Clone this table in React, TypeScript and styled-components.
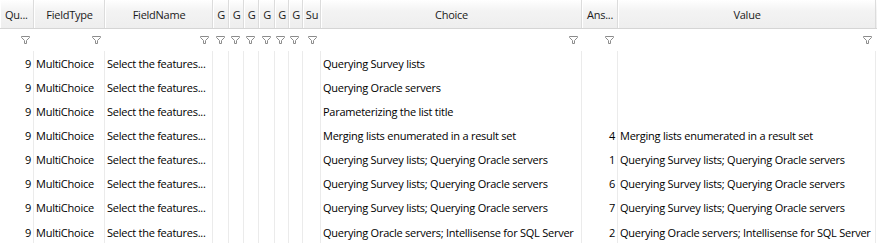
import React from 'react';
import styled, { createGlobalStyle } from 'styled-components';

const GlobalStyle = createGlobalStyle`
  html, body {
    margin: 0;
    padding: 0;
    background: #ffffff;
  }
  body {
    font-family: 'Open Sans', 'Noto Sans', Arial, sans-serif;
    font-size: 11px;
    letter-spacing: -0.25px;
    color: #000;
  }
`;

type Col = { key: string; title: string; width: number; align: 'left' | 'right' };

const columns: Col[] = [
  { key: 'qu', title: 'Qu...', width: 34, align: 'right' },
  { key: 'type', title: 'FieldType', width: 71, align: 'left' },
  { key: 'name', title: 'FieldName', width: 108, align: 'left' },
  { key: 'g1', title: 'G', width: 16, align: 'left' },
  { key: 'g2', title: 'G', width: 15, align: 'left' },
  { key: 'g3', title: 'G', width: 15, align: 'left' },
  { key: 'g4', title: 'G', width: 16, align: 'left' },
  { key: 'g5', title: 'G', width: 14, align: 'left' },
  { key: 'g6', title: 'G', width: 14, align: 'left' },
  { key: 'su', title: 'Su', width: 18, align: 'left' },
  { key: 'choice', title: 'Choice', width: 261, align: 'left' },
  { key: 'ans', title: 'Ans...', width: 36, align: 'right' },
  { key: 'value', title: 'Value', width: 258, align: 'left' },
];

const template = columns.map((c) => `${c.width}px`).join(' ') + ' 1fr';

type Row = { choice: string; ans: string; value: string };

const rows: Row[] = [
  { choice: 'Querying Survey lists', ans: '', value: '' },
  { choice: 'Querying Oracle servers', ans: '', value: '' },
  { choice: 'Parameterizing the list title', ans: '', value: '' },
  {
    choice: 'Merging lists enumerated in a result set',
    ans: '4',
    value: 'Merging lists enumerated in a result set',
  },
  {
    choice: 'Querying Survey lists; Querying Oracle servers',
    ans: '1',
    value: 'Querying Survey lists; Querying Oracle servers',
  },
  {
    choice: 'Querying Survey lists; Querying Oracle servers',
    ans: '6',
    value: 'Querying Survey lists; Querying Oracle servers',
  },
  {
    choice: 'Querying Survey lists; Querying Oracle servers',
    ans: '7',
    value: 'Querying Survey lists; Querying Oracle servers',
  },
  {
    choice: 'Querying Oracle servers; Intellisense for SQL Server',
    ans: '2',
    value: 'Querying Oracle servers; Intellisense for SQL Server',
  },
];

const Grid = styled.div`
  width: 877px;
  height: 243px;
  overflow: hidden;
  background: #fff;
`;

const HeaderRow = styled.div`
  display: grid;
  grid-template-columns: ${template};
  height: 29px;
  box-sizing: border-box;
  border-bottom: 1px solid #d5d5d5;
  background: linear-gradient(#ffffff, #f3f3f3 40%, #eeeeee);
`;

const HeaderCell = styled.div<{ $first?: boolean }>`
  box-sizing: border-box;
  border-right: 1px solid #dcdcdc;
  border-left: 1px solid #ffffff;
  display: flex;
  align-items: center;
  justify-content: ${(p) => (p.$first ? 'flex-start' : 'center')};
  padding: 0 ${(p) => (p.$first ? '4px' : '0')};
  white-space: nowrap;
  overflow: hidden;
  color: #1a1a1a;
`;

const FilterRow = styled.div`
  display: grid;
  grid-template-columns: ${template};
  height: 19px;
`;

const FilterCell = styled.div`
  display: flex;
  align-items: center;
  justify-content: flex-end;
  padding-right: 4px;
  padding-top: 2px;
`;

const DataRow = styled.div<{ $first?: boolean }>`
  display: grid;
  grid-template-columns: ${template};
  height: 24.15px;
  margin-top: ${(p) => (p.$first ? '3px' : '0')};
`;

const DataCell = styled.div<{ $align: 'left' | 'right' }>`
  box-sizing: border-box;
  border-right: 1px solid #ebebeb;
  display: flex;
  align-items: center;
  justify-content: ${(p) => (p.$align === 'right' ? 'flex-end' : 'flex-start')};
  padding: ${(p) => (p.$align === 'right' ? '0 2px 0 0' : '0 0 0 2px')};
  white-space: nowrap;
  overflow: hidden;
`;

const Funnel = () => (
  <svg width="9" height="8" viewBox="0 0 9 8">
    <path
      d="M0.5 0.5 H8.5 V1.5 L5.5 4.5 V7.5 H3.5 V4.5 L0.5 1.5 Z"
      fill="none"
      stroke="#8c8c8c"
      strokeWidth="1"
    />
  </svg>
);

const cellText = (col: Col, row: Row) => {
  switch (col.key) {
    case 'qu':
      return '9';
    case 'type':
      return 'MultiChoice';
    case 'name':
      return 'Select the features...';
    case 'choice':
      return row.choice;
    case 'ans':
      return row.ans;
    case 'value':
      return row.value;
    default:
      return '';
  }
};

const App = () => {
  return (
    <Grid>
      <GlobalStyle />
      <HeaderRow>
        {columns.map((c, i) => (
          <HeaderCell key={c.key} $first={i === 0}>
            {c.title}
          </HeaderCell>
        ))}
        <div />
      </HeaderRow>
      <FilterRow>
        {columns.map((c) => (
          <FilterCell key={c.key}>
            <Funnel />
          </FilterCell>
        ))}
        <div />
      </FilterRow>
      {rows.map((r, i) => (
        <DataRow key={i} $first={i === 0}>
          {columns.map((c) => (
            <DataCell key={c.key} $align={c.align}>
              {cellText(c, r)}
            </DataCell>
          ))}
          <div />
        </DataRow>
      ))}
    </Grid>
  );
};

export default App;
